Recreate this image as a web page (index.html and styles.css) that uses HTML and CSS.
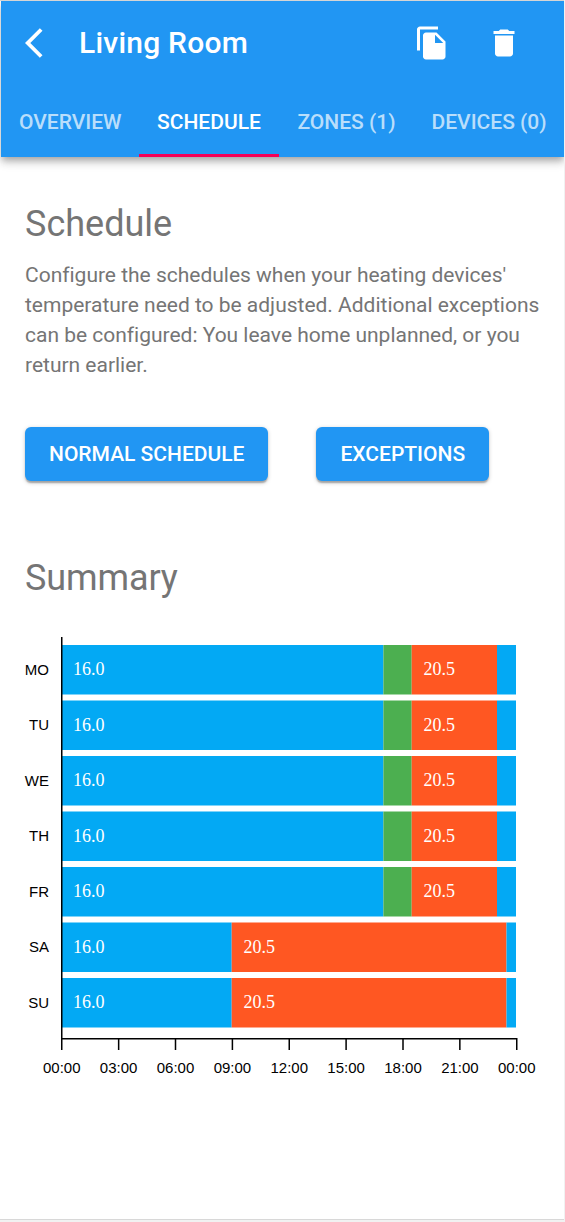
FILE: index.html
```html
<!DOCTYPE html>
<html lang="en">
<head>
<meta charset="utf-8">
<title>Living Room</title>
<link rel="stylesheet" href="styles.css">
</head>
<body>
<div class="page">
  <header class="app-bar">
    <div class="toolbar">
      <svg class="icon back" viewBox="0 0 24 24"><path d="M11.67 3.87 9.9 2.1 0 12l9.9 9.9 1.77-1.77L3.54 12z"/></svg>
      <h1 class="title">Living Room</h1>
      <svg class="icon copy" viewBox="0 0 24 24"><path d="M16 1H4c-1.100 0-2 .9-2 2v14h2V3h12V1zm-1 4 6 6v10c0 1.100-.9 2-2 2H7.990C6.890 23 6 22.100 6 21l.01-14c0-1.100.89-2 1.990-2h7zm-1 7h5.500L14 6.500V12z"/></svg>
      <svg class="icon delete" viewBox="0 0 24 24"><path d="M6 19c0 1.100.9 2 2 2h8c1.100 0 2-.9 2-2V7H6v12zM19 4h-3.500l-1-1h-5l-1 1H5v2h14V4z"/></svg>
    </div>
    <nav class="tabs">
      <a class="tab">OVERVIEW</a>
      <a class="tab active">SCHEDULE</a>
      <a class="tab">ZONES (1)</a>
      <a class="tab">DEVICES (0)</a>
    </nav>
  </header>
  <main class="content">
    <h2 class="heading">Schedule</h2>
    <p class="description">Configure the schedules when your heating devices' temperature need to be adjusted. Additional exceptions can be configured: You leave home unplanned, or you return earlier.</p>
    <div class="actions">
      <button class="button">NORMAL SCHEDULE</button>
      <button class="button">EXCEPTIONS</button>
    </div>
    <h2 class="heading">Summary</h2>
    <svg class="chart" width="540" height="460" viewBox="0 620 540 460">
      <defs>
        <g id="weekday">
          <rect class="cold" x="61.4" width="322" height="49.500"/>
          <rect class="mild" x="383.400" width="28.300" height="49.500"/>
          <rect class="warm" x="411.700" width="85.300" height="49.500"/>
          <rect class="cold" x="497" width="19" height="49.500"/>
          <text class="value" x="73" y="30">16.0</text>
          <text class="value" x="423.500" y="30">20.5</text>
        </g>
        <g id="weekend">
          <rect class="cold" x="61.4" width="170.300" height="49.500"/>
          <rect class="warm" x="231.700" width="274.800" height="49.500"/>
          <rect class="cold" x="506.500" width="9.500" height="49.500"/>
          <text class="value" x="73" y="30">16.0</text>
          <text class="value" x="243.500" y="30">20.5</text>
        </g>
      </defs>
      <use href="#weekday" y="645"/>
      <use href="#weekday" y="700.500"/>
      <use href="#weekday" y="756"/>
      <use href="#weekday" y="811.500"/>
      <use href="#weekday" y="867"/>
      <use href="#weekend" y="922.500"/>
      <use href="#weekend" y="978"/>
      <path class="axis" d="M61.750 637V1050M61 1038.750H517.500M118.650 1038V1050M175.500 1038V1050M232.400 1038V1050M289.250 1038V1050M346.100 1038V1050M403 1038V1050M459.850 1038V1050M516.750 1038V1050"/>
      <g class="days">
        <text x="49" y="675">MO</text>
        <text x="49" y="730">TU</text>
        <text x="49" y="786">WE</text>
        <text x="49" y="841">TH</text>
        <text x="49" y="897">FR</text>
        <text x="49" y="952">SA</text>
        <text x="49" y="1008">SU</text>
      </g>
      <g class="hours">
        <text x="61.750" y="1073">00:00</text>
        <text x="118.600" y="1073">03:00</text>
        <text x="175.500" y="1073">06:00</text>
        <text x="232.400" y="1073">09:00</text>
        <text x="289.250" y="1073">12:00</text>
        <text x="346.100" y="1073">15:00</text>
        <text x="403" y="1073">18:00</text>
        <text x="459.900" y="1073">21:00</text>
        <text x="516.750" y="1073">00:00</text>
      </g>
    </svg>
  </main>
</div>
</body>
</html>
```
FILE: styles.css
```css
* { box-sizing: border-box; }
body {
  margin: 0;
  height: 1222px;
  overflow: hidden;
  background: #f1f1f1;
  font-family: Roboto, "Liberation Sans", sans-serif;
}
.page {
  width: 564px;
  height: 1220px;
  padding-left: 1px;
  overflow: hidden;
  background: #fff;
  border-top: 1px solid #d5d5d5;
  border-bottom: 1px solid #d8d8d8;
}
.app-bar {
  height: 156px;
  background: #2196f3;
  color: #fff;
  box-shadow: 0 3px 6px -1.5px rgba(0,0,0,.2), 0 6px 7.5px rgba(0,0,0,.14), 0 1.5px 15px rgba(0,0,0,.12);
}
.toolbar {
  display: flex;
  align-items: center;
  height: 84px;
  padding: 0 42px 0 24px;
}
.icon { width: 36px; height: 36px; fill: #fff; flex: none; }
.title {
  flex: 1;
  margin: 0 0 0 18px;
  font-size: 30px;
  font-weight: 500;
  line-height: 48px;
  letter-spacing: .0075em;
}
.delete { margin-left: 36px; }
.tabs { display: flex; height: 72px; }
.tab {
  flex: none;
  padding: 0 18px;
  font-size: 21px;
  font-weight: 500;
  line-height: 74px;
  color: rgba(255,255,255,.7);
}
.tab:first-child { width: 138px; }
.tab.active { width: 140px; color: #fff; box-shadow: inset 0 -3px #f50057; }
.tab:nth-child(3) { padding-left: 18.4px; }
.content { padding: 43px 24px 0; }
.heading {
  margin: 0;
  font-size: 36px;
  font-weight: 400;
  line-height: 48px;
  color: #757575;
}
.description {
  margin: 12px 0 0;
  font-size: 21px;
  line-height: 30px;
  letter-spacing: -.01px;
  color: #757575;
}
.actions { display: flex; gap: 48px; margin: 47px 0 73px; }
.actions + .heading { letter-spacing: -.1px; }
.button {
  height: 54px;
  padding: 0 24px;
  border: 0;
  border-radius: 6px;
  background: #2196f3;
  color: #fff;
  font: 500 21px/54px Roboto, "Liberation Sans", sans-serif;
  box-shadow: 0 1.5px 4.5px rgba(0,0,0,.2), 0 1.5px 1.5px rgba(0,0,0,.14), 0 3px 1.5px -1.5px rgba(0,0,0,.12);
}
.chart { display: block; margin: 18px 0 0 -25px; }
.cold { fill: #03a9f4; }
.mild { fill: #4caf50; }
.warm { fill: #ff5722; }
.axis { fill: none; stroke: #000; stroke-width: 1.5; }
.value { font: 18px "Liberation Serif", serif; fill: #fff; }
.days, .hours { font: 15px "Liberation Sans", sans-serif; fill: #000; }
.days { text-anchor: end; }
.hours { text-anchor: middle; }
```
